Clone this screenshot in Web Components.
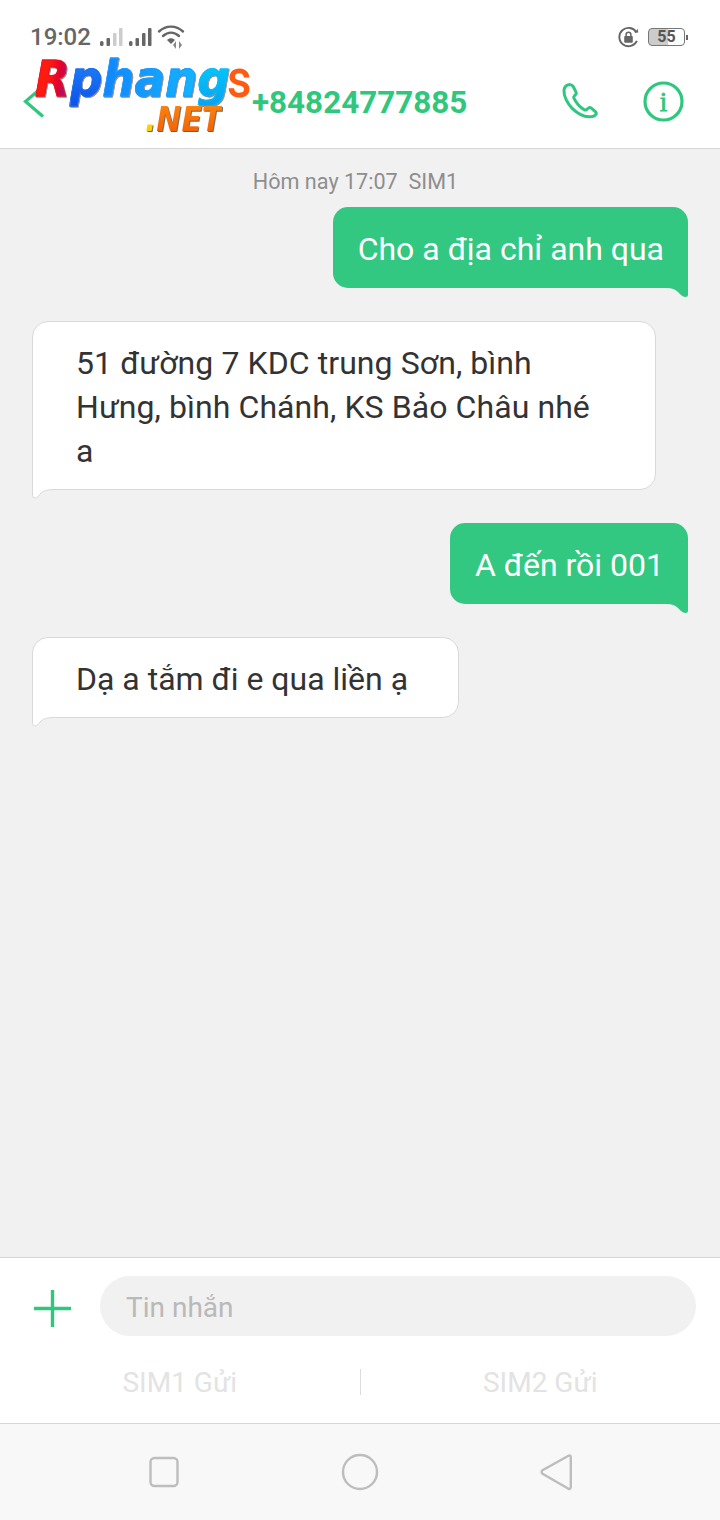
<!DOCTYPE html>
<html lang="vi"><head><meta charset="utf-8"><title>Tin nhắn</title>
<style>
html,body{margin:0;padding:0;width:720px;height:1520px;overflow:hidden;font-family:Roboto,"Noto Sans",sans-serif;background:#f1f1f1}
</style></head><body>
<sms-app></sms-app>
<script>
const G='#2fc77d';
function def(name,css,html){
  customElements.define(name,class extends HTMLElement{
    constructor(){super();this.attachShadow({mode:'open'}).innerHTML=`<style>${css}</style>${typeof html==='function'?html(this):html}`;}
  });
}
def('status-bar',`
:host{display:flex;align-items:center;height:50px;padding:24px 0 0 30px;box-sizing:border-box;color:#666;font:500 24px/1 Roboto,sans-serif}
svg{display:block}
.time{width:70px}
.sp{flex:1}
.batt{width:37px;height:18px;border:1.5px solid #777;border-radius:4px;box-sizing:border-box;position:relative;margin:0 0 0 9px;font:700 16px/15px Roboto,sans-serif;text-align:center;color:#555;background:linear-gradient(90deg,#ccc 55%,#fff 55%)}
.tip{width:2px;height:5px;background:#666;margin:0 32px 0 1px}
`,`<span class="time">19:02</span>
<svg width="23" height="20" viewBox="0 0 23 20"><g fill="#666"><rect x="0" y="14" width="3.500" height="5" rx="1.500"/><rect x="6.500" y="11" width="3.500" height="8" rx="1"/></g><g fill="#ccc"><rect x="13" y="6" width="3.500" height="13" rx="1"/><rect x="19" y="1" width="3.500" height="18" rx="1"/></g></svg>
<svg width="23" height="20" viewBox="0 0 23 20" style="margin-left:6px"><g fill="#666"><rect x="0" y="14" width="3.500" height="5" rx="1.500"/><rect x="6.500" y="11" width="3.500" height="8" rx="1"/><rect x="13" y="6" width="3.500" height="13" rx="1"/><rect x="19" y="1" width="3.500" height="18" rx="1"/></g></svg>
<svg width="30" height="26" viewBox="0 0 30 26" style="margin-left:5px"><g fill="none" stroke="#666" stroke-width="2.400" stroke-linecap="round"><path d="M2 7.500C9 1 19 1 26 7.500"/><path d="M6 12c5-4.500 11-4.500 16 0"/></g><path d="M10 16c2.500-2.400 5.500-2.400 8 0l-4 4z" fill="#666"/><path d="M19 17v8l-3-4zM22 17v8l3-4z" fill="#888"/></svg>
<span class="sp"></span>
<svg width="21" height="22" viewBox="0 0 22 22"><path d="M19.800 15A9.600 9.600 0 1 1 19.300 6.200" fill="none" stroke="#666" stroke-width="2"/><path d="M17.500 6.500l3.800-.3-.8-3.800z" fill="#666"/><rect x="6.500" y="10" width="9" height="7" rx="1" fill="#666"/><path d="M8.500 10.500V8.500a2.500 2.500 0 0 1 5 0v2" fill="none" stroke="#666" stroke-width="1.600"/></svg>
<span class="batt">55</span><span class="tip"></span>`);

def('brand-logo',`
:host{display:block;position:absolute;left:35px;top:56px;width:220px;height:80px;pointer-events:none}
.top{position:absolute;left:0;top:-12px;white-space:nowrap;font:italic 700 50px/1.4 "DejaVu Sans",sans-serif;transform:scaleX(.905);transform-origin:left top;filter:drop-shadow(1px 1.500px 0 rgba(40,40,60,.55))}
.top span,.net span{-webkit-background-clip:text;background-clip:text;color:transparent}
.r{background-image:linear-gradient(100deg,#ff1a10 40%,#e00030 65%,#5a2fc0);-webkit-text-stroke:1px #f01020}
.p{background-image:linear-gradient(180deg,#1f8cff,#0d4fe8);-webkit-text-stroke:.8px #1670f0}
.h{background-image:linear-gradient(90deg,#1285ff,#12b5ff);-webkit-text-stroke:.8px #1c9cff}
.g{background-image:linear-gradient(180deg,#00d4ff,#0aa0f0);-webkit-text-stroke:.8px #08bcf8}
.s{position:absolute;left:192px;top:-4px;font:500 54px/1 Roboto,sans-serif;color:#ff5a12;transform:scaleX(.88);transform-origin:left top}
.net{position:absolute;left:110px;top:43px;font:italic 700 34px/1.2 "DejaVu Sans",sans-serif;white-space:nowrap;transform:scaleX(.88);transform-origin:left top;filter:drop-shadow(1px 1px 0 rgba(40,30,20,.7))}
.d{background-image:linear-gradient(#ffe000,#ffc800)}
.n{background-image:linear-gradient(180deg,#ff8a10,#f05a05)}
`,`<span class="top"><span class="r">R</span><span class="p">p</span><span class="h">han</span><span class="g">g</span></span><span class="s">s</span>
<span class="net"><span class="d">.</span><span class="n">NET</span></span>`);

def('top-bar',`
:host{display:flex;align-items:center;height:99px;box-sizing:border-box;border-bottom:1px solid #d6d6d6;background:#fff;padding:7px 0 0 252px;position:relative;flex:none}
svg{display:block;flex:none}
.num{font:700 31.400px/1 Roboto,sans-serif;color:${G};flex:1;white-space:nowrap;margin-top:0}
.back{position:absolute;left:22px;top:35px}
`,`<svg class="back" width="24" height="33" viewBox="0 0 24 33"><path d="M21 1.500 3.500 16.500 21 31.500" fill="none" stroke="${G}" stroke-width="3.200"/></svg>
<span class="num">+84824777885</span>
<svg width="38" height="38" viewBox="0 0 38 38" style="margin-right:44px;margin-top:-4px"><path d="M7.500 2.800c-2 .6-4.300 2.600-4.500 5.500-.4 6 3.600 13.600 8.400 18.300 5 4.800 11 8 16.600 8.200 3.500.1 6.200-1 7.200-2.800.5-.9-.3-1.900-1.700-3.100l-3.500-3c-.8-.6-1.600-.6-2.300 0l-2.200 1.800c-.7.5-1.500.5-2.300 0-3.400-2.100-8.300-7.400-10.300-11.600-.4-.8-.2-1.500.4-2.100l1.500-1.700c.6-.7.6-1.400.2-2.200L12.500 5c-.9-1.700-3.300-2.800-5-2.200z" fill="none" stroke="${G}" stroke-width="3" stroke-linejoin="round"/></svg>
<svg width="41" height="41" viewBox="0 0 41 41" style="margin-right:36px;margin-top:-2px"><circle cx="20.500" cy="20.500" r="18.500" fill="none" stroke="${G}" stroke-width="3.200"/><text x="20.500" y="30" text-anchor="middle" font-family="Liberation Serif,serif" font-size="27" fill="${G}" stroke="${G}" stroke-width=".8">i</text></svg>`);

def('time-label',`:host{display:block;text-align:center;font:400 21.600px/24px Roboto,sans-serif;color:#8e8e8e;height:24px;margin:21px 9px 13px 0;white-space:pre}`,`<slot></slot>`);

def('sms-bubble',`
:host{display:block;position:relative;box-sizing:border-box;font:400 32px/44px Roboto,sans-serif;width:max-content}
:host([out]){background:#33c881;color:#fff;border-radius:15px 15px 0 15px;padding:20px 24px 17px 25px;margin-left:auto;margin-right:32px;height:81px}
:host(:not([out])){background:#fff;color:#333;border:1px solid #d9d9d9;border-radius:16px 16px 16px 0;padding:19px 50px 16px 43px;margin-left:32px}
svg{position:absolute;display:block}
:host([out]) svg{right:0;bottom:-10px}
:host(:not([out])) svg{left:-1px;bottom:-10px}
`,el=>el.hasAttribute('out')
?`<slot></slot><svg width="21" height="10" viewBox="0 0 21 10"><path d="M0 0 Q7 0 11 4 L14 7 Q16 9 18.500 9 Q21 9 21 6.500 V0Z" fill="#33c881"/></svg>`
:`<slot></slot><svg width="30" height="13" viewBox="0 0 30 13"><path d="M.5 0 V9.500 Q.5 12 3 12 Q4.500 12 6 10.500 L9 7 Q13 3.500 22 3.500 H30 V0 Z" fill="#fff"/><path d="M.5 0 V9.500 Q.5 12 3 12 Q4.500 12 6 10.500 L9 7 Q13 3.500 22 3.500 H30" fill="none" stroke="#d9d9d9"/></svg>`);

def('message-list',`
:host{display:block;flex:1;background:#f1f1f1;min-height:0}
::slotted(sms-bubble){margin-bottom:33px}
`,`<slot></slot>`);

def('composer-bar',`
:host{display:block;flex:none;background:#fff;border-top:1px solid #d6d6d6;height:166px;box-sizing:border-box}
.row{display:flex;align-items:flex-start;padding:18px 24px 0 34px}
.row svg{margin-top:14px}
.in{flex:1;height:60px;border-radius:30px;background:#f1f1f1;margin-left:29px;padding-left:26px;font:400 28px/63px Roboto,sans-serif;color:#b9b9b9}
svg{display:block}
.send{display:flex;align-items:center;margin-top:33px;height:26px;font:400 28px/29px Roboto,sans-serif;color:#e3e3e3}
.send span{flex:1;text-align:center}
.send i{width:1px;height:26px;background:#dcdcdc}
`,`<div class="row"><svg width="37" height="37" viewBox="0 0 37 37"><path d="M18.500 0v37M0 18.500h37" stroke="${G}" stroke-width="3.400"/></svg><div class="in">Tin nhắn</div></div>
<div class="send"><span>SIM1 Gửi</span><i></i><span>SIM2 Gửi</span></div>`);

def('nav-bar',`
:host{display:flex;flex:none;height:97px;background:#f8f8f8;border-top:1px solid #d6d6d6;box-sizing:border-box;align-items:center;justify-content:space-between;padding:0 147px 0 148px}
svg{display:block}
`,`<svg width="32" height="32" viewBox="0 0 32 32"><rect x="2.500" y="2" width="27" height="28" rx="4" fill="none" stroke="#bdbdbd" stroke-width="2.400"/></svg>
<svg width="38" height="38" viewBox="0 0 38 38"><circle cx="19" cy="19" r="17" fill="none" stroke="#bdbdbd" stroke-width="2.400"/></svg>
<svg width="34" height="38" viewBox="0 0 34 38"><path d="M29.500 2.800 3.500 17.200c-1.200 1-1.200 2.600 0 3.600L29 35.500c1 .8 2.800.5 2.800-1.500V4c0-1.400-1.200-2-2.300-1.200z" fill="none" stroke="#bdbdbd" stroke-width="2.400" stroke-linejoin="round"/></svg>`);

def('sms-app',`
:host{display:flex;flex-direction:column;width:720px;height:1520px;background:#f1f1f1}
.head{background:#fff;flex:none}
`,`<div class="head"><status-bar></status-bar><top-bar></top-bar></div><brand-logo></brand-logo>
<message-list>
<time-label>Hôm nay 17:07  SIM1</time-label>
<sms-bubble out>Cho a địa chỉ anh qua</sms-bubble>
<sms-bubble style="width:624px;letter-spacing:.08px">51 đường 7 KDC trung Sơn, bình Hưng, bình Chánh, KS Bảo Châu nhé a</sms-bubble>
<sms-bubble out>A đến rồi 001</sms-bubble>
<sms-bubble>Dạ a tắm đi e qua liền ạ</sms-bubble>
</message-list>
<composer-bar></composer-bar><nav-bar></nav-bar>`);
</script></body></html>
